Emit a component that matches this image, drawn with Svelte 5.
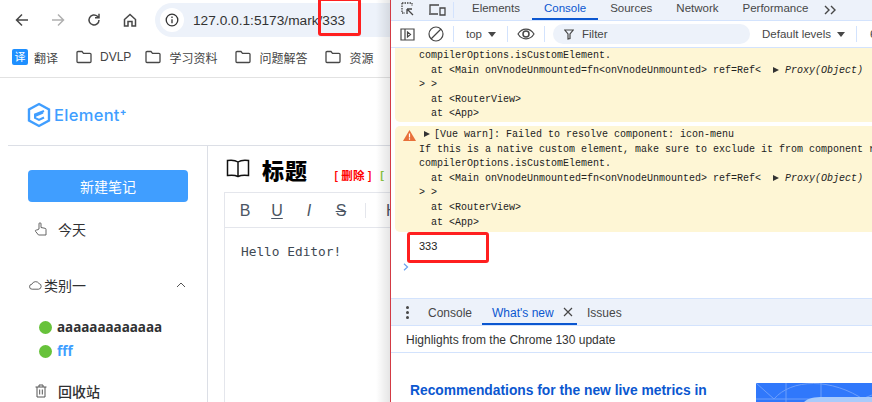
<script>
	const bookmarks = ["DVLP", "学习资料", "问题解答", "资源"];
	const customElement = "compilerOptions.isCustomElement.";
</script>

<div class="screen">
	<section class="browser">
		<div class="toolbar">
			<svg class="nav" width="16" height="16" viewBox="0 0 16 16"><path d="M14 8H3M8 2.500 2.500 8 8 13.500" fill="none" stroke="#474747" stroke-width="1.500"/></svg>
			<svg class="nav" width="16" height="16" viewBox="0 0 16 16"><path d="M2 8h11M8 2.500 13.500 8 8 13.500" fill="none" stroke="#b0b0b0" stroke-width="1.500"/></svg>
			<svg class="nav" width="16" height="16" viewBox="0 0 16 16"><path d="M13 8a5 5 0 1 1-1.600-3.700L13 5.800M13 1.800v4h-4" fill="none" stroke="#474747" stroke-width="1.500"/></svg>
			<svg class="nav" width="16" height="16" viewBox="0 0 16 16"><path d="M2.500 7.500 8 2.500l5.500 5v6.500h-3.500v-4.500h-4v4.500h-3.500z" fill="none" stroke="#474747" stroke-width="1.500"/></svg>
			<div class="address">
				<span class="info"><svg width="14" height="14" viewBox="0 0 14 14"><circle cx="7" cy="7" r="5.800" fill="none" stroke="#333" stroke-width="1.300"/><path d="M7 6.300v4M7 3.500v1.400" stroke="#333" stroke-width="1.300"/></svg></span>
				<span>127.0.0.1:5173/mark/333</span>
			</div>
		</div>
		<div class="bookmarks">
			<span class="mark"><span class="yi">译</span>翻译</span>
			{#each bookmarks as b}
				<span class="mark">
					<svg width="16" height="14" viewBox="0 0 16 14"><path d="M1 2.500a1 1 0 0 1 1-1h4l1.500 1.800H14a1 1 0 0 1 1 1v7.200a1 1 0 0 1-1 1H2a1 1 0 0 1-1-1z" fill="none" stroke="#474747" stroke-width="1.300"/></svg>
					{b}
				</span>
			{/each}
		</div>
		<div class="page">
			<div class="logo">
				<svg width="24" height="26" viewBox="0 0 24 26"><path d="M12 2 22 7.500v11L12 24 2 18.500v-11z" fill="none" stroke="#409eff" stroke-width="2.400"/><path d="M17 9 8 12.500v3.500l4 2 5-2.500M8 14l8-3.500" fill="none" stroke="#409eff" stroke-width="2"/></svg>
				<span class="logotext">Element<sup>+</sup></span>
			</div>
			<div class="main">
				<aside class="side">
					<button class="newnote">新建笔记</button>
					<div class="row today">
						<svg width="14" height="14" viewBox="0 0 14 14"><path d="M5 7V1.800a1 1 0 0 1 2 0V5.500l4 .8a1.200 1.200 0 0 1 1 1.200V13H4.500L1.500 9.300c-.5-.8.500-1.800 1.400-1.200z" fill="none" stroke="#555" stroke-width=".9"/></svg>
						<span>今天</span>
					</div>
					<div class="row cat">
						<svg width="13" height="10" viewBox="0 0 13 10"><path d="M3.200 9.200a2.500 2.500 0 0 1-.3-5A4 4 0 0 1 10 3.500a2.900 2.900 0 0 1-.5 5.700z" fill="none" stroke="#555" stroke-width=".9"/></svg>
						<span>类别一</span>
						<svg class="chev" width="10" height="6" viewBox="0 0 10 6"><path d="M1 5 5 1l4 4" fill="none" stroke="#555"/></svg>
					</div>
					<div class="note"><i></i>aaaaaaaaaaaaa</div>
					<div class="note on"><i></i>fff</div>
					<div class="row trash">
						<svg width="14" height="14" viewBox="0 0 14 14"><path d="M1.500 3h11M5 3V1h4v2M3 3v10h8V3M5.700 5.500v5M8.300 5.500v5" fill="none" stroke="#555"/></svg>
						<span>回收站</span>
					</div>
				</aside>
				<div class="doc">
					<div class="head">
						<svg width="24" height="22" viewBox="0 0 24 22"><path d="M12 4C9 2 5 2 1.500 2.500v15C5 17 9 17 12 18.500c3-1.500 7-1.500 10.500-1V2.500C19 2 15 2 12 4zM12 4v14.500" fill="none" stroke="#111" stroke-width="1.500"/></svg>
						<h1>标题</h1>
						<span class="del">[ 删除 ]</span>
						<span class="other">[</span>
					</div>
					<div class="editor">
						<div class="tools">
							<span class="tool">B</span>
							<span class="tool u">U</span>
							<span class="tool it">I</span>
							<span class="tool s">S</span>
							<span class="sep"></span>
							<span class="h">H</span>
						</div>
						<div class="code">Hello Editor!</div>
					</div>
				</div>
			</div>
		</div>
		<div class="edge"></div>
	</section>

	<section class="devtools">
		<div class="tabs">
			<svg class="ic1" width="16" height="16" viewBox="0 0 16 16"><path d="M2 1h10v3M2 1v10h3" fill="none" stroke="#474747" stroke-width="1.300" stroke-dasharray="1.500 1"/><path d="M7 7l6 6M7 7v5M7 7h5" fill="none" stroke="#474747" stroke-width="1.300"/></svg>
			<svg class="ic2" width="18" height="14" viewBox="0 0 18 14"><path d="M2 10V2h9M1 11h9M12 5h5v7h-5z" fill="none" stroke="#474747" stroke-width="1.300"/></svg>
			<span class="vline"></span>
			<span class="tab first">Elements</span>
			<span class="tab active">Console</span>
			<span class="tab">Sources</span>
			<span class="tab">Network</span>
			<span class="tab">Performance</span>
			<svg class="more" width="13" height="10" viewBox="0 0 13 10"><path d="M1 1l4 4-4 4M7 1l4 4-4 4" fill="none" stroke="#474747" stroke-width="1.400"/></svg>
		</div>
		<div class="filterbar">
			<svg class="ic1" width="15" height="15" viewBox="0 0 15 15"><path d="M1 2h13v11H1zM5 2v11M7.500 5l3 2.500-3 2.500z" fill="none" stroke="#474747" stroke-width="1.200"/></svg>
			<svg class="ic3" width="16" height="16" viewBox="0 0 16 16"><circle cx="8" cy="8" r="7" fill="none" stroke="#474747" stroke-width="1.200"/><path d="M3 13 13 3" stroke="#474747" stroke-width="1.200"/></svg>
			<span class="vline"></span>
			<span class="top">top <i class="down"></i></span>
			<span class="vline"></span>
			<svg class="eye" width="18" height="12" viewBox="0 0 18 12"><path d="M1 6c4-6.500 12-6.500 16 0-4 6.500-12 6.500-16 0z" fill="none" stroke="#474747" stroke-width="1.200"/><circle cx="9" cy="6" r="3" fill="none" stroke="#474747" stroke-width="1.500"/></svg>
			<span class="vline"></span>
			<div class="filter">
				<svg width="10" height="11" viewBox="0 0 10 11"><path d="M.8 1h8.400L6 5v4.500L4 10V5z" fill="none" stroke="#474747" stroke-width="1.200"/></svg>
				<span>Filter</span>
			</div>
			<span class="levels">Default levels <i class="down"></i></span>
			<span class="vline"></span>
			<span class="count">6</span>
		</div>
		<div class="console">
			<div class="warn first">
				<div>{customElement}</div>
				<div class="in">at &lt;Main onVnodeUnmounted=fn&lt;onVnodeUnmounted&gt; ref=Ref&lt; <i class="tri"></i><em>Proxy(Object)</em></div>
				<div>&gt; &gt;</div>
				<div class="in">at &lt;RouterView&gt;</div>
				<div class="in">at &lt;App&gt;</div>
			</div>
			<div class="warn second">
				<svg class="alert" width="13" height="11" viewBox="0 0 13 11"><path d="M6.500 0 13 11H0z" fill="#e8703a"/><path d="M6.500 3.500v4M6.500 8.300v1.500" stroke="#fff" stroke-width="1.200"/></svg>
				<div class="summary"><i class="tri"></i>[Vue warn]: Failed to resolve component: icon-menu</div>
				<div>If this is a native custom element, make sure to exclude it from component resolution via</div>
				<div>{customElement}</div>
				<div class="in">at &lt;Main onVnodeUnmounted=fn&lt;onVnodeUnmounted&gt; ref=Ref&lt; <i class="tri"></i><em>Proxy(Object)</em></div>
				<div>&gt; &gt;</div>
				<div class="in">at &lt;RouterView&gt;</div>
				<div class="in">at &lt;App&gt;</div>
			</div>
			<div class="log">333</div>
			<svg class="prompt" width="6" height="8" viewBox="0 0 6 8"><path d="M1 .800 4.500 4 1 7.200" fill="none" stroke="#6aa0ee" stroke-width="1.200"/></svg>
		</div>
		<div class="drawer">
			<span class="dots"><i></i><i></i><i></i></span>
			<span class="dtab">Console</span>
			<span class="dtab active">What's new
				<svg class="x" width="10" height="10" viewBox="0 0 10 10"><path d="M1 1l8 8M9 1 1 9" fill="none" stroke="#474747" stroke-width="1.200"/></svg>
			</span>
			<span class="dtab last">Issues</span>
		</div>
		<div class="highlights">Highlights from the Chrome 130 update</div>
		<div class="news">
			<h2>Recommendations for the new live metrics in</h2>
			<svg class="banner" width="116" height="19" viewBox="0 0 116 19">
				<rect width="116" height="19" fill="#3078fb"/>
				<path d="M0 0l18 16M116 12l-18 7M30 0v19M65 0v19M0 16h116M18 16C35-4 75-6 110 18" fill="none" stroke="#6d9ffb" stroke-width="1"/>
				<path d="M48 19c4-4 10-5 20-5h48v5z" fill="#a9cbfb"/>
			</svg>
		</div>
	</section>

	<div class="redbox one"></div>
	<div class="redbox two"></div>
</div>

<style>
	:global(body) {
		margin: 0;
		overflow: hidden;
		background: #fff;
	}

	.screen {
		position: relative;
		width: 872px;
		height: 402px;
		display: flex;
		overflow: hidden;
		font-family: "Liberation Sans", "Noto Sans CJK SC", sans-serif;
		color: #333;
	}

	.browser {
		position: relative;
		width: 390px;
		flex: none;
		overflow: hidden;
	}

	.edge {
		position: absolute;
		top: 0;
		right: 0;
		bottom: 0;
		width: 14px;
		background: linear-gradient(to right, rgba(0, 0, 0, 0), rgba(0, 0, 0, 0.1));
	}

	.toolbar {
		height: 40px;
		display: flex;
		align-items: center;
		padding-left: 14px;
		box-sizing: border-box;
	}

	.nav {
		margin-right: 20px;
		flex: none;
	}

	.address {
		display: flex;
		align-items: center;
		gap: 9px;
		width: 300px;
		height: 34px;
		margin-left: -3px;
		padding-left: 5px;
		box-sizing: border-box;
		background: #edf2fa;
		border-radius: 17px;
		font-size: 13.700px;
		color: #333;
		flex: none;
	}

	.info {
		width: 24px;
		height: 24px;
		border-radius: 50%;
		background: #fff;
		display: flex;
		align-items: center;
		justify-content: center;
	}

	.bookmarks {
		height: 38px;
		border-bottom: 1px solid #e2e2e2;
		box-sizing: border-box;
		display: flex;
		align-items: center;
		padding: 0 0 3px 12px;
		gap: 18px;
		font-size: 12px;
		color: #444;
		white-space: nowrap;
	}

	.mark {
		display: flex;
		align-items: center;
		gap: 8px;
	}

	.mark:first-child {
		gap: 6px;
	}

	.mark:nth-child(2) {
		margin-right: -4px;
	}

	.yi {
		width: 16px;
		height: 16px;
		border-radius: 2px;
		background: #1e8fff;
		color: #fff;
		font-size: 11px;
		text-align: center;
		line-height: 16px;
	}

	.page {
		padding-left: 8px;
	}

	.logo {
		height: 68px;
		display: flex;
		align-items: center;
		padding: 7px 0 0 19px;
		gap: 3px;
		box-sizing: border-box;
		border-bottom: 1px solid #dcdfe6;
	}

	.logotext {
		font-family: "Inter", sans-serif;
		font-size: 16.500px;
		font-weight: 500;
		color: #409eff;
		letter-spacing: 0.3px;
	}

	.logotext sup {
		font-size: 10px;
		font-weight: 700;
		line-height: 0;
	}

	.main {
		display: flex;
		height: 256px;
	}

	.side {
		width: 200px;
		flex: none;
		border-right: 1px solid #dcdfe6;
		padding: 24px 0 0 20px;
		box-sizing: border-box;
	}

	.newnote {
		display: block;
		width: 160px;
		height: 32px;
		border: 0;
		border-radius: 4px;
		background: #409eff;
		color: #fff;
		font: 14px "Noto Sans CJK SC", sans-serif;
		padding: 0;
	}

	.row {
		display: flex;
		align-items: center;
		font-size: 14px;
		color: #303133;
	}

	.today {
		margin-top: 17px;
		height: 20px;
		padding-left: 6px;
		gap: 10px;
	}

	.cat {
		margin-top: 36px;
		height: 20px;
		gap: 2px;
		width: 160px;
		padding-left: 1px;
		box-sizing: border-box;
	}

	.chev {
		margin-left: auto;
		margin-right: 2px;
	}

	.note {
		display: flex;
		align-items: center;
		gap: 5px;
		height: 24px;
		padding-left: 11px;
		font-size: 13.500px;
		font-weight: 700;
		color: #303133;
		font-family: "Noto Sans", sans-serif;
	}

	.cat + .note {
		margin-top: 20px;
	}

	.note i {
		width: 13px;
		height: 13px;
		border-radius: 50%;
		background: #67c23a;
	}

	.note.on {
		color: #409eff;
	}

	.trash {
		margin-top: 18px;
		padding-left: 6px;
		gap: 10px;
		font-weight: 500;
	}

	.doc {
		flex: 1;
		padding-left: 16px;
		min-width: 0;
	}

	.head {
		height: 46px;
		display: flex;
		align-items: center;
		white-space: nowrap;
		padding: 0 0 1px 2px;
		box-sizing: border-box;
	}

	.head h1 {
		margin: 0 0 0 12px;
		font: 900 22px "Noto Sans CJK SC", sans-serif;
		color: #000;
		letter-spacing: 1px;
	}

	.del {
		margin: 12px 0 0 26px;
		font: 700 11.500px "Noto Sans CJK SC", sans-serif;
		color: #f00;
		letter-spacing: 0.2px;
	}

	.other {
		margin: 12px 0 0 8px;
		font: 700 11px "Liberation Sans", sans-serif;
		color: #8cc63f;
	}

	.editor {
		height: 300px;
		border: 1px solid #e4e6ec;
		box-sizing: border-box;
		border-right: 0;
	}

	.tools {
		height: 35px;
		border-bottom: 1px solid #e4e6ec;
		display: flex;
		align-items: center;
		padding: 1px 0 0 4px;
		font-size: 16px;
		color: #4b5563;
		box-sizing: border-box;
		white-space: nowrap;
	}

	.tool {
		width: 32px;
		text-align: center;
		flex: none;
	}

	.tool.u {
		text-decoration: underline;
		text-underline-offset: 2px;
	}

	.tool.it {
		font-style: italic;
	}

	.tool.s {
		text-decoration: line-through;
	}

	.sep {
		width: 1px;
		height: 15px;
		margin: 0 20px 0 8px;
		background: #e4e6ec;
		flex: none;
	}

	.code {
		padding: 17px 16px;
		font: 12.800px/1.100 "DejaVu Sans Mono", monospace;
		color: #3f4a54;
	}

	.devtools {
		width: 482px;
		flex: none;
		border-left: 1px solid #d33a44;
		box-sizing: border-box;
		font-size: 11.500px;
		overflow: hidden;
	}

	.tabs {
		height: 21px;
		background: #edf2fa;
		border-bottom: 1px solid #d3e3fd;
		box-sizing: border-box;
		display: flex;
		align-items: center;
		padding-left: 9px;
		white-space: nowrap;
		color: #474747;
	}

	.tabs .ic1 {
		margin-right: 12px;
	}

	.tabs .ic2 {
		margin-right: 7px;
	}

	.tab {
		padding: 0 12px;
		height: 20px;
		line-height: 16px;
		box-sizing: border-box;
	}

	.tab.first {
		margin-left: 6px;
	}

	.tab.active {
		color: #0b57d0;
		border-bottom: 2px solid #0b57d0;
	}

	.more {
		margin-left: 4px;
		flex: none;
	}

	.vline {
		width: 1px;
		height: 16px;
		background: #d3e3fd;
		flex: none;
	}

	.filterbar {
		height: 27px;
		display: flex;
		align-items: center;
		padding-left: 9px;
		border-bottom: 1px solid #d3e3fd;
		box-sizing: border-box;
		white-space: nowrap;
		color: #474747;
	}

	.filterbar svg {
		flex: none;
	}

	.filterbar .ic1 {
		margin-right: 13px;
	}

	.filterbar .ic3 {
		margin-right: 9px;
	}

	.top {
		margin-left: 12px;
		width: 41px;
		flex: none;
	}

	.filterbar .eye {
		margin: 0 9px;
	}

	.filter {
		width: 197px;
		height: 20px;
		margin-left: 8px;
		flex: none;
		display: flex;
		align-items: center;
		gap: 8px;
		padding-left: 11px;
		border-radius: 10px;
		background: #edf2fa;
		box-sizing: border-box;
	}

	.levels {
		margin-left: 12px;
		width: 94px;
		flex: none;
	}

	.count {
		margin-left: 13px;
	}

	.down {
		display: inline-block;
		border: 4px solid transparent;
		border-top: 5px solid #474747;
		border-bottom: 0;
		margin-left: 3px;
		vertical-align: 1px;
	}

	.console {
		height: 250px;
		padding-left: 4px;
		font: 10px/14.600px "Liberation Mono", monospace;
		color: #222;
		white-space: nowrap;
		overflow: hidden;
		box-sizing: border-box;
	}

	.warn {
		position: relative;
		background: #fef6d5;
		border-radius: 0 0 0 5px;
		padding: 1px 0 0 24px;
		height: 74px;
		box-sizing: border-box;
		overflow: hidden;
	}

	.warn.second {
		height: 106px;
		margin-top: 4px;
		padding-top: 2px;
		border-radius: 5px 0 0 5px;
	}

	.alert {
		position: absolute;
		left: 8px;
		top: 4px;
	}

	.summary {
		padding-left: 15px;
	}

	.summary .tri {
		margin: 0 4px 0 -10px;
	}

	.in {
		padding-left: 12px;
	}

	.tri {
		display: inline-block;
		border: 3.500px solid transparent;
		border-left: 6px solid #333;
		border-right: 0;
		margin: 0 6px 0 6px;
	}

	.log {
		height: 30px;
		line-height: 28px;
		padding-left: 24px;
		font-family: "Liberation Sans", sans-serif;
		font-size: 11px;
	}

	.prompt {
		display: block;
		margin: 1px 0 0 8px;
	}

	.drawer {
		height: 28px;
		background: #edf2fa;
		border-top: 1px solid #d3e3fd;
		border-bottom: 1px solid #d3e3fd;
		box-sizing: border-box;
		display: flex;
		align-items: stretch;
		padding-left: 15px;
		color: #474747;
		white-space: nowrap;
		line-height: 28px;
		font-size: 12px;
	}

	.dots {
		width: 4px;
		display: flex;
		flex-direction: column;
		justify-content: center;
		gap: 2px;
		margin-right: 8px;
	}

	.dots i {
		width: 3px;
		height: 3px;
		border-radius: 50%;
		background: #474747;
	}

	.dtab {
		padding: 0 10px;
	}

	.dtab.active {
		color: #0b57d0;
		border-bottom: 2px solid #0b57d0;
		padding-right: 4px;
	}

	.x {
		margin-left: 6px;
	}

	.highlights {
		height: 27px;
		line-height: 28px;
		font-size: 12px;
		padding-left: 15px;
		border-bottom: 1px solid #d3e3fd;
		box-sizing: border-box;
		color: #333;
	}

	.news {
		display: flex;
		align-items: flex-start;
		padding: 30px 0 0 19px;
	}

	.news h2 {
		margin: 0;
		width: 346px;
		flex: none;
		font-size: 13.800px;
		line-height: 16px;
		color: #0b57d0;
		white-space: nowrap;
	}

	.banner {
		flex: none;
	}

	.redbox {
		position: absolute;
		box-sizing: border-box;
		border: 3px solid #ff1f1f;
		border-radius: 3px;
	}

	.redbox.one {
		left: 318px;
		top: -2px;
		width: 43px;
		height: 38px;
	}

	.redbox.two {
		left: 407px;
		top: 232px;
		width: 82px;
		height: 31px;
	}
</style>
